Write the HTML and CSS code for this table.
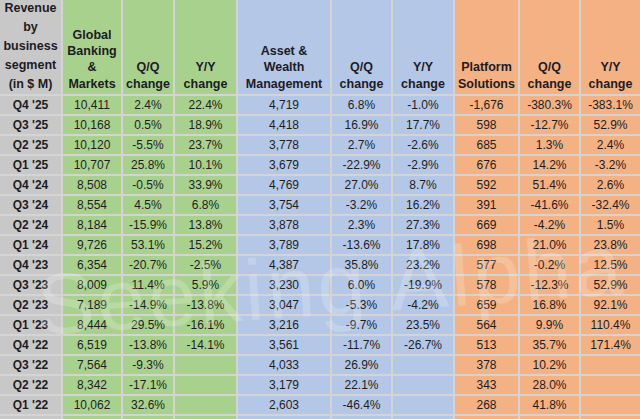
FILE: index.html
```html
<!DOCTYPE html>
<html lang="en">
<head>
<meta charset="utf-8">
<title>Revenue by business segment</title>
<link rel="stylesheet" href="styles.css">
</head>
<body>
<div class="sheet">
  <div class="grid">
    <div class="cell seg head first">Revenue<br>by<br>business<br>segment<br>(in $ M)</div>
    <div class="cell gbm head">Global<br>Banking<br>&amp;<br>Markets</div>
    <div class="cell gbm head">Q/Q<br>change</div>
    <div class="cell gbm head">Y/Y<br>change</div>
    <div class="cell awm head">Asset &amp;<br>Wealth<br>Management</div>
    <div class="cell awm head">Q/Q<br>change</div>
    <div class="cell awm head">Y/Y<br>change</div>
    <div class="cell ps head">Platform<br>Solutions</div>
    <div class="cell ps head">Q/Q<br>change</div>
    <div class="cell ps head">Y/Y<br>change</div>

    <div class="cell seg">Q4 '25</div><div class="cell gbm">10,411</div><div class="cell gbm">2.4%</div><div class="cell gbm">22.4%</div><div class="cell awm">4,719</div><div class="cell awm">6.8%</div><div class="cell awm">-1.0%</div><div class="cell ps">-1,676</div><div class="cell ps">-380.3%</div><div class="cell ps">-383.1%</div>
    <div class="cell seg">Q3 '25</div><div class="cell gbm">10,168</div><div class="cell gbm">0.5%</div><div class="cell gbm">18.9%</div><div class="cell awm">4,418</div><div class="cell awm">16.9%</div><div class="cell awm">17.7%</div><div class="cell ps">598</div><div class="cell ps">-12.7%</div><div class="cell ps">52.9%</div>
    <div class="cell seg">Q2 '25</div><div class="cell gbm">10,120</div><div class="cell gbm">-5.5%</div><div class="cell gbm">23.7%</div><div class="cell awm">3,778</div><div class="cell awm">2.7%</div><div class="cell awm">-2.6%</div><div class="cell ps">685</div><div class="cell ps">1.3%</div><div class="cell ps">2.4%</div>
    <div class="cell seg">Q1 '25</div><div class="cell gbm">10,707</div><div class="cell gbm">25.8%</div><div class="cell gbm">10.1%</div><div class="cell awm">3,679</div><div class="cell awm">-22.9%</div><div class="cell awm">-2.9%</div><div class="cell ps">676</div><div class="cell ps">14.2%</div><div class="cell ps">-3.2%</div>
    <div class="cell seg">Q4 '24</div><div class="cell gbm">8,508</div><div class="cell gbm">-0.5%</div><div class="cell gbm">33.9%</div><div class="cell awm">4,769</div><div class="cell awm">27.0%</div><div class="cell awm">8.7%</div><div class="cell ps">592</div><div class="cell ps">51.4%</div><div class="cell ps">2.6%</div>
    <div class="cell seg">Q3 '24</div><div class="cell gbm">8,554</div><div class="cell gbm">4.5%</div><div class="cell gbm">6.8%</div><div class="cell awm">3,754</div><div class="cell awm">-3.2%</div><div class="cell awm">16.2%</div><div class="cell ps">391</div><div class="cell ps">-41.6%</div><div class="cell ps">-32.4%</div>
    <div class="cell seg">Q2 '24</div><div class="cell gbm">8,184</div><div class="cell gbm">-15.9%</div><div class="cell gbm">13.8%</div><div class="cell awm">3,878</div><div class="cell awm">2.3%</div><div class="cell awm">27.3%</div><div class="cell ps">669</div><div class="cell ps">-4.2%</div><div class="cell ps">1.5%</div>
    <div class="cell seg">Q1 '24</div><div class="cell gbm">9,726</div><div class="cell gbm">53.1%</div><div class="cell gbm">15.2%</div><div class="cell awm">3,789</div><div class="cell awm">-13.6%</div><div class="cell awm">17.8%</div><div class="cell ps">698</div><div class="cell ps">21.0%</div><div class="cell ps">23.8%</div>
    <div class="cell seg">Q4 '23</div><div class="cell gbm">6,354</div><div class="cell gbm">-20.7%</div><div class="cell gbm">-2.5%</div><div class="cell awm">4,387</div><div class="cell awm">35.8%</div><div class="cell awm">23.2%</div><div class="cell ps">577</div><div class="cell ps">-0.2%</div><div class="cell ps">12.5%</div>
    <div class="cell seg">Q3 '23</div><div class="cell gbm">8,009</div><div class="cell gbm">11.4%</div><div class="cell gbm">5.9%</div><div class="cell awm">3,230</div><div class="cell awm">6.0%</div><div class="cell awm">-19.9%</div><div class="cell ps">578</div><div class="cell ps">-12.3%</div><div class="cell ps">52.9%</div>
    <div class="cell seg">Q2 '23</div><div class="cell gbm">7,189</div><div class="cell gbm">-14.9%</div><div class="cell gbm">-13.8%</div><div class="cell awm">3,047</div><div class="cell awm">-5.3%</div><div class="cell awm">-4.2%</div><div class="cell ps">659</div><div class="cell ps">16.8%</div><div class="cell ps">92.1%</div>
    <div class="cell seg">Q1 '23</div><div class="cell gbm">8,444</div><div class="cell gbm">29.5%</div><div class="cell gbm">-16.1%</div><div class="cell awm">3,216</div><div class="cell awm">-9.7%</div><div class="cell awm">23.5%</div><div class="cell ps">564</div><div class="cell ps">9.9%</div><div class="cell ps">110.4%</div>
    <div class="cell seg">Q4 '22</div><div class="cell gbm">6,519</div><div class="cell gbm">-13.8%</div><div class="cell gbm">-14.1%</div><div class="cell awm">3,561</div><div class="cell awm">-11.7%</div><div class="cell awm">-26.7%</div><div class="cell ps">513</div><div class="cell ps">35.7%</div><div class="cell ps">171.4%</div>
    <div class="cell seg">Q3 '22</div><div class="cell gbm">7,564</div><div class="cell gbm">-9.3%</div><div class="cell gbm"></div><div class="cell awm">4,033</div><div class="cell awm">26.9%</div><div class="cell awm"></div><div class="cell ps">378</div><div class="cell ps">10.2%</div><div class="cell ps"></div>
    <div class="cell seg">Q2 '22</div><div class="cell gbm">8,342</div><div class="cell gbm">-17.1%</div><div class="cell gbm"></div><div class="cell awm">3,179</div><div class="cell awm">22.1%</div><div class="cell awm"></div><div class="cell ps">343</div><div class="cell ps">28.0%</div><div class="cell ps"></div>
    <div class="cell seg">Q1 '22</div><div class="cell gbm">10,062</div><div class="cell gbm">32.6%</div><div class="cell gbm"></div><div class="cell awm">2,603</div><div class="cell awm">-46.4%</div><div class="cell awm"></div><div class="cell ps">268</div><div class="cell ps">41.8%</div><div class="cell ps"></div>
    <div class="cell seg"></div><div class="cell gbm"></div><div class="cell gbm"></div><div class="cell gbm"></div><div class="cell awm"></div><div class="cell awm"></div><div class="cell awm"></div><div class="cell ps"></div><div class="cell ps"></div><div class="cell ps"></div>
  </div>
  <div class="watermark">Seeking Alpha</div>
</div>
</body>
</html>
```

FILE: styles.css
```css
html, body {
  margin: 0;
  padding: 0;
}
body {
  width: 640px;
  height: 419px;
  overflow: hidden;
  background: #d4d4d4;
  font-family: "Liberation Sans", Arial, sans-serif;
}
.sheet {
  position: relative;
  width: 640px;
  height: 419px;
  overflow: hidden;
}
.grid {
  display: grid;
  grid-template-columns: 61px 58px 50px 61px 92px 59px 60px 63px 59px 59px;
  grid-template-rows: 94px;
  grid-auto-rows: 18px;
  gap: 2px;
  background: #d4d4d4;
}
.cell {
  display: flex;
  align-items: center;
  justify-content: center;
  text-align: center;
  font-size: 12px;
  color: #1e1e1e;
  white-space: nowrap;
}
.seg {
  background: #c8c8c8;
  font-weight: bold;
  color: #1c1c24;
}
.gbm { background: #a9d18e; }
.awm { background: #b4c7e7; }
.ps { background: #f4b183; }
.head {
  align-items: flex-end;
  font-weight: bold;
  font-size: 12.5px;
  line-height: 16.3px;
  padding-bottom: 2px;
  box-sizing: border-box;
  color: #1c1c24;
}
.head.first {
  line-height: 19px;
  padding-bottom: 0;
}
.watermark {
  position: absolute;
  left: 40px;
  top: 262px;
  font-size: 86px;
  line-height: 1;
  letter-spacing: 3px;
  font-family: "Liberation Sans", Arial, sans-serif;
  color: rgba(255, 255, 255, 0.2);
  white-space: nowrap;
  transform: rotate(-4deg);
  transform-origin: left bottom;
  pointer-events: none;
}
```
